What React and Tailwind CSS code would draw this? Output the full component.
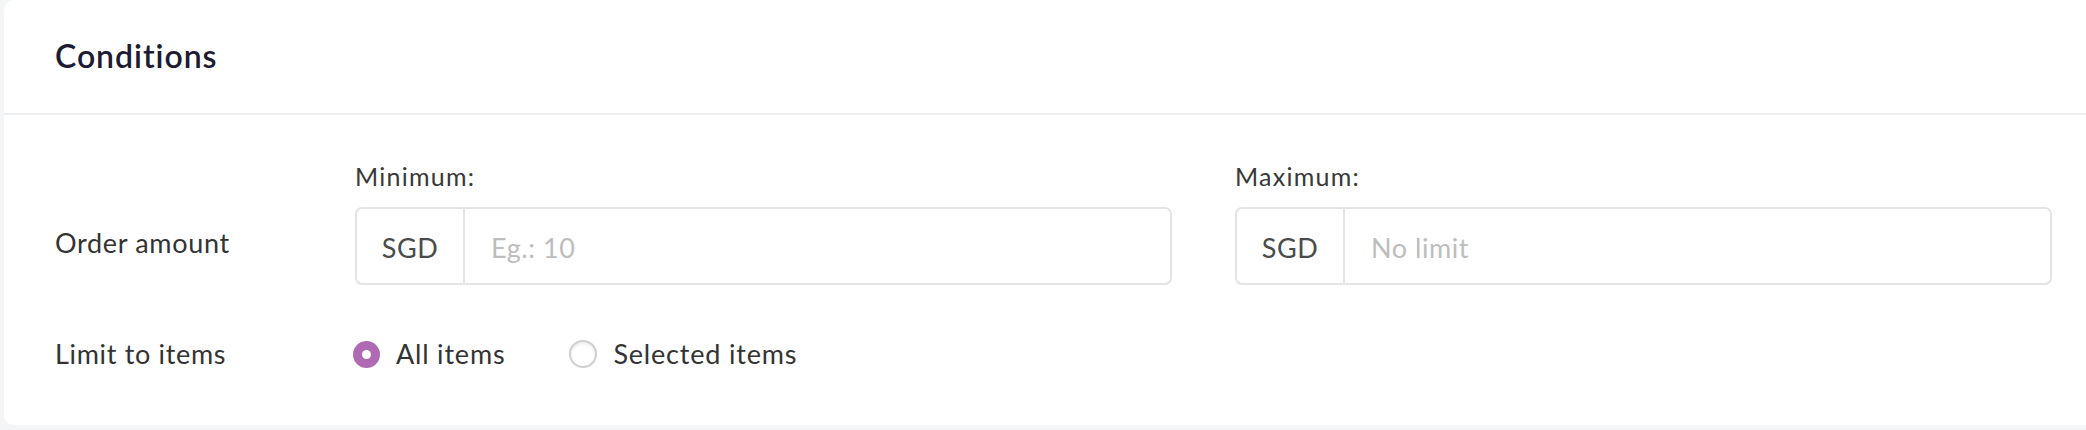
import { useState } from 'react'

const font = { fontFamily: 'Lato, "Open Sans", sans-serif' }

function AmountInput({ label, placeholder }) {
  return (
    <div>
      <p className="text-[25px] leading-[36px] tracking-[0.05em] text-[#383838] mb-[13px]">{label}</p>
      <div className="flex h-[78px] rounded-[7px] border-2 border-[#e4e4e4] bg-white">
        <span className="w-[108px] shrink-0 flex items-center justify-center border-r-2 border-[#e4e4e4] text-[27px] tracking-[0.02em] text-[#4a4a4a] pt-[4px]">
          SGD
        </span>
        <input
          className="flex-1 min-w-0 px-[26px] pt-[4px] text-[27px] tracking-[0.02em] text-[#333] placeholder:text-[#bdbdbd] outline-none bg-transparent"
          placeholder={placeholder}
        />
      </div>
    </div>
  )
}

function Radio({ checked, label, onClick }) {
  return (
    <button onClick={onClick} className="flex items-center gap-[16px] text-[27px] leading-[40px] tracking-[0.03em] text-[#333]">
      {checked ? (
        <span className="w-[27px] h-[27px] rounded-full bg-[#b06ab3] flex items-center justify-center">
          <span className="w-[9px] h-[9px] rounded-full bg-white" />
        </span>
      ) : (
        <span className="w-[28px] h-[28px] rounded-full border-2 border-[#cfcfcf] bg-white shadow-[inset_0_2px_3px_rgba(0,0,0,0.08)]" />
      )}
      <span>{label}</span>
    </button>
  )
}

export default function App() {
  const [limit, setLimit] = useState('all')

  return (
    <div className="min-h-[430px] bg-[#f4f5f7] pl-[4px] pb-[3px]" style={font}>
      <div className="bg-white rounded-l-[10px]">
        {/* Header */}
        <div className="h-[115px] pl-[51px] flex items-center border-b-2 border-[#eef0f2]">
          <h2 className="text-[32px] font-semibold tracking-[0.03em] text-[#1d1a34] pb-[2px]">Conditions</h2>
        </div>

        {/* Body */}
        <div className="pl-[51px] pr-[34px] pt-[43px] pb-[51px]">
          <div className="flex">
            <div className="w-[300px] shrink-0 flex items-end">
              <p className="h-[78px] flex items-center text-[27px] tracking-[0.025em] text-[#333] pb-[6px]">Order amount</p>
            </div>
            <div className="flex-1 grid grid-cols-2 gap-x-[63px]">
              <AmountInput label="Minimum:" placeholder="Eg.: 10" />
              <AmountInput label="Maximum:" placeholder="No limit" />
            </div>
          </div>

          <div className="flex mt-[49px]">
            <p className="w-[300px] shrink-0 text-[27px] leading-[40px] tracking-[0.025em] text-[#333]">Limit to items</p>
            <div className="flex items-center gap-[64px] -ml-[2px]">
              <Radio checked={limit === 'all'} label="All items" onClick={() => setLimit('all')} />
              <Radio checked={limit === 'selected'} label="Selected items" onClick={() => setLimit('selected')} />
            </div>
          </div>
        </div>
      </div>
    </div>
  )
}
